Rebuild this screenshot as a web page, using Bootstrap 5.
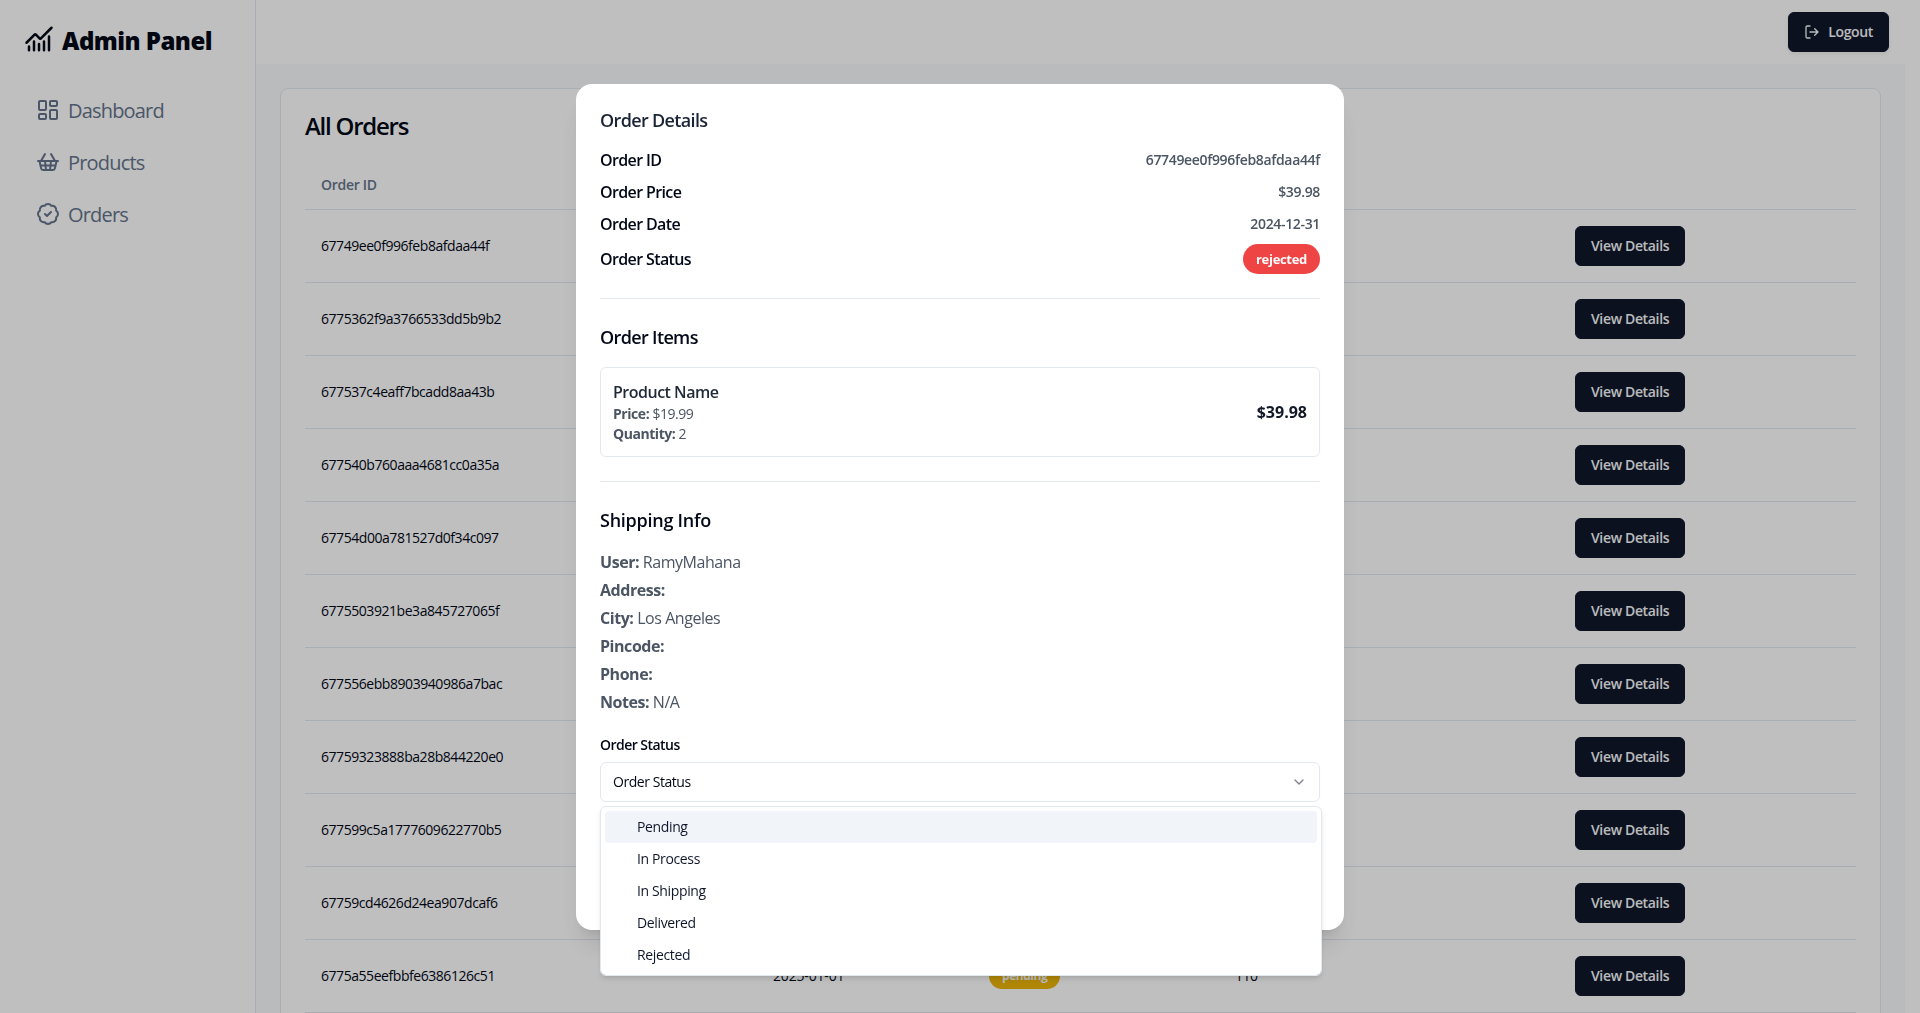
<!DOCTYPE html>
<html lang="en">
<head>
<meta charset="utf-8">
<meta name="viewport" content="width=device-width, initial-scale=1">
<title>Admin Panel</title>
<link href="https://cdn.jsdelivr.net/npm/bootstrap@5.3.0/dist/css/bootstrap.min.css" rel="stylesheet">
<style>
  :root { --ink: #020817; --line: #e2e8f0; --muted: #64748b; --navy: #0f172a; }
  body { font-family: "Open Sans", "Noto Sans", sans-serif; font-size: 14px; line-height: 20px; letter-spacing: -.032em; color: var(--ink); height: 100vh; overflow: hidden; padding-right: 15px; background: #fff; }
  svg { fill: none; stroke: currentColor; stroke-width: 2; stroke-linecap: round; stroke-linejoin: round; flex: none; display: block; }
  .drop-1 { padding-top: 1px; margin-bottom: -1px; }
  .sidebar { width: 256px; border-right: 1px solid var(--line); padding: 24px; }
  .brand { font-size: 24px; font-weight: 800; line-height: 32px; letter-spacing: -.022em; }
  .brand svg { margin-top: -2px; }
  .side-nav { margin-top: 32px; }
  .side-nav .nav-link { font-size: 20px; line-height: 28px; padding: 8px 12px; color: var(--muted); letter-spacing: -.041em; }
  .topbar { height: 64px; background: #fff; }
  .workspace { background: #f9fafd; padding: 24px; min-height: 0; }
  .orders-card { border: 1px solid var(--line); border-radius: 8px; padding: 24px; height: 1000px; }
  .orders-card h1 { font-size: 24px; line-height: 24px; font-weight: 600; letter-spacing: -.052em; margin: 0; padding-top: 1px; }
  .orders-table { table-layout: fixed; margin: 23px 0 0; --bs-table-bg: transparent; --bs-table-color: var(--ink); border-collapse: separate; border-spacing: 0; }
  .orders-table th { height: 49px; padding: 0 16px; color: var(--muted); font-weight: 600; letter-spacing: -.02em; border-bottom: 1px solid var(--line); vertical-align: middle; }
  .orders-table td { padding: 16px; height: 73px; border-bottom: 1px solid var(--line); vertical-align: middle; color: var(--ink); }
  .orders-table td:nth-child(2) { letter-spacing: -.012em; }
  .btn-navy { --bs-btn-bg: var(--navy); --bs-btn-color: #f8fafc; --bs-btn-border-color: var(--navy); --bs-btn-hover-bg: #273044; --bs-btn-hover-color: #f8fafc; font-size: 14px; line-height: 20px; font-weight: 600; height: 40px; padding: 9px 15px; border-radius: 6px; letter-spacing: -.025em; }
  .pill { display: inline-block; border-radius: 15px; font-size: 12px; line-height: 16px; padding: 5px 13px; color: #f8fafc; font-weight: 700; vertical-align: middle; }
  .pill-pending { background: #eab308; }
  .pill-rejected { background: #ef4444; line-height: 20px; font-size: 13px; letter-spacing: -.024em; }
  .modal-backdrop-soft { background: rgba(0,0,0,.25); }
  .modal-dialog { max-width: 768px; margin: 84px auto 0; }
  .modal-content { height: 846px; border: 0; border-radius: 16px; padding: 24px; color: var(--ink); box-shadow: 0 20px 25px -5px rgba(0,0,0,.1), 0 8px 10px -6px rgba(0,0,0,.1); }
  .modal-content h2 { font-size: 18px; line-height: 28px; font-weight: 600; margin: 0; letter-spacing: -.036em; }
  .modal-content h2.dialog-heading { line-height: 25px; color: #1b2436; }
  .modal-content h2.ship-heading { letter-spacing: -.014em; }
  .facts { font-size: 16px; line-height: 24px; font-weight: 600; margin-top: 15px; letter-spacing: -.039em; }
  .facts .value { font-size: 14px; color: #4b5563; letter-spacing: -.024em; }
  .rule { height: 1px; background: var(--line); margin: 24px 0; }
  .item-box { border: 1px solid var(--line); border-radius: 6px; height: 90px; padding: 12px; margin-top: 16px; color: #4b5563; }
  .item-box .item-name { font-size: 16px; line-height: 24px; font-weight: 600; color: #1f2937; letter-spacing: -.031em; }
  .item-total { font-size: 16px; font-weight: 700; color: #111827; letter-spacing: 0; }
  .shipping { font-size: 16px; line-height: 28px; color: #4b5563; margin-top: 14px; letter-spacing: -.028em; }
  strong { font-weight: 700; }
  .status-label { font-weight: 600; letter-spacing: -.038em; margin-top: 19px; }
  .status-select { height: 40px; border: 1px solid var(--line); border-radius: 6px; padding: 0 12px; margin-top: 7px; }
  .status-menu { display: block; top: 100%; left: -1px; width: 722px; margin-top: 5px; border: 1px solid var(--line); border-radius: 6px; padding: 4px; height: 170px; box-shadow: 0 4px 6px -1px rgba(0,0,0,.1), 0 2px 4px -2px rgba(0,0,0,.1); }
  .status-menu .dropdown-item { font-size: 14px; line-height: 20px; padding: 6px 8px 6px 32px; border-radius: 4px; color: #0f172a; letter-spacing: -.026em; }
  .status-menu .dropdown-item.active { background: #f1f5f9; }
</style>
</head>
<body class="d-flex">

<aside class="sidebar vh-100 flex-shrink-0">
  <div class="brand d-flex align-items-center gap-2">
    <svg width="30" height="30" viewBox="0 0 24 24"><path d="M12 16v5M16 14v7M20 10v11M22 3l-8.646 8.646a.5.5 0 0 1-.708 0L9.354 8.354a.5.5 0 0 0-.707 0L2 15M4 18v3M8 14v7"/></svg>
    <span class="drop-1">Admin Panel</span>
  </div>
  <nav class="side-nav nav flex-column gap-2">
    <a class="nav-link d-flex align-items-center gap-2" href="#"><svg width="24" height="24" viewBox="0 0 24 24"><rect x="3" y="3" width="7" height="9" rx="1"/><rect x="14" y="3" width="7" height="5" rx="1"/><rect x="14" y="12" width="7" height="9" rx="1"/><rect x="3" y="16" width="7" height="5" rx="1"/></svg><span class="drop-1">Dashboard</span></a>
    <a class="nav-link d-flex align-items-center gap-2" href="#"><svg width="24" height="24" viewBox="0 0 24 24"><path d="m15 11-1 9M19 11l-4-7M2 11h20M3.5 11l1.6 7.4a2 2 0 0 0 2 1.6h9.8a2 2 0 0 0 2-1.6l1.7-7.4M4.5 15.5h15M5 11l4-7M9 11l1 9"/></svg><span class="drop-1">Products</span></a>
    <a class="nav-link d-flex align-items-center gap-2" href="#"><svg width="24" height="24" viewBox="0 0 24 24"><path d="M3.85 8.62a4 4 0 0 1 4.78-4.77 4 4 0 0 1 6.74 0 4 4 0 0 1 4.78 4.78 4 4 0 0 1 0 6.74 4 4 0 0 1-4.77 4.78 4 4 0 0 1-6.75 0 4 4 0 0 1-4.78-4.77 4 4 0 0 1 0-6.76Z"/><path d="m9 12 2 2 4-4"/></svg><span class="drop-1">Orders</span></a>
  </nav>
</aside>

<div class="flex-grow-1 d-flex flex-column vh-100 overflow-hidden">
  <header class="topbar d-flex align-items-center justify-content-end px-3 flex-shrink-0">
    <button class="btn btn-navy shadow-sm d-inline-flex align-items-center gap-2" type="button"><svg width="16" height="16" viewBox="0 0 24 24"><path d="M9 21H5a2 2 0 0 1-2-2V5a2 2 0 0 1 2-2h4M16 17l5-5-5-5M21 12H9"/></svg><span>Logout</span></button>
  </header>
  <main class="workspace flex-grow-1">
    <section class="orders-card bg-white">
      <h1>All Orders</h1>
      <table class="table orders-table">
        <colgroup><col style="width:452px"><col style="width:216px"><col style="width:246px"><col style="width:340px"><col></colgroup>
        <thead><tr><th>Order ID</th><th>Order Date</th><th>Order Status</th><th>Order Price</th><th></th></tr></thead>
        <tbody id="orderRows"></tbody>
      </table>
    </section>
  </main>
</div>

<div class="modal d-block modal-backdrop-soft" tabindex="-1" role="dialog">
  <div class="modal-dialog">
    <div class="modal-content">
      <h2 class="dialog-heading">Order Details</h2>
      <div class="facts d-flex flex-column gap-2">
        <div class="d-flex justify-content-between"><span>Order ID</span><span class="value">67749ee0f996feb8afdaa44f</span></div>
        <div class="d-flex justify-content-between"><span>Order Price</span><span class="value">$39.98</span></div>
        <div class="d-flex justify-content-between"><span>Order Date</span><span class="value">2024-12-31</span></div>
        <div class="d-flex justify-content-between align-items-center"><span>Order Status</span><span class="pill pill-rejected">rejected</span></div>
      </div>
      <div class="rule"></div>
      <h2>Order Items</h2>
      <div class="item-box d-flex align-items-center justify-content-between">
        <div>
          <div class="item-name">Product Name</div>
          <div><strong>Price:</strong> $19.99</div>
          <div><strong>Quantity:</strong> 2</div>
        </div>
        <span class="item-total">$39.98</span>
      </div>
      <div class="rule"></div>
      <h2 class="ship-heading">Shipping Info</h2>
      <div class="shipping">
        <div><strong>User:</strong> RamyMahana</div>
        <div><strong>Address:</strong></div>
        <div><strong>City:</strong> Los Angeles</div>
        <div><strong>Pincode:</strong></div>
        <div><strong>Phone:</strong></div>
        <div><strong>Notes:</strong> N/A</div>
      </div>
      <div class="status-label">Order Status</div>
      <div class="status-select dropdown d-flex align-items-center justify-content-between">
        <span>Order Status</span>
        <svg width="16" height="16" viewBox="0 0 24 24" opacity=".5"><path d="m6 9 6 6 6-6"/></svg>
        <div class="dropdown-menu status-menu">
          <a class="dropdown-item active" href="#">Pending</a>
          <a class="dropdown-item" href="#">In Process</a>
          <a class="dropdown-item" href="#">In Shipping</a>
          <a class="dropdown-item" href="#">Delivered</a>
          <a class="dropdown-item" href="#">Rejected</a>
        </div>
      </div>
    </div>
  </div>
</div>

<script src="https://cdn.jsdelivr.net/npm/bootstrap@5.3.0/dist/js/bootstrap.bundle.min.js"></script>
<script>
  const orders = [
    ["67749ee0f996feb8afdaa44f"], ["6775362f9a3766533dd5b9b2"], ["677537c4eaff7bcadd8aa43b"],
    ["677540b760aaa4681cc0a35a"], ["67754d00a781527d0f34c097"], ["6775503921be3a845727065f"],
    ["677556ebb8903940986a7bac"], ["67759323888ba28b844220e0"], ["677599c5a1777609622770b5"],
    ["67759cd4626d24ea907dcaf6"], ["6775a55eefbbfe6386126c51", "2025-01-01", "pending", "110"]
  ];
  document.getElementById("orderRows").innerHTML = orders.map(([id, date = "", status, price = ""]) =>
    `<tr><td>${id}</td><td>${date}</td><td>${status ? `<span class="pill pill-${status}">${status}</span>` : ""}</td><td>${price}</td>
     <td><button class="btn btn-navy" type="button">View Details</button></td></tr>`).join("");
</script>
</body>
</html>
